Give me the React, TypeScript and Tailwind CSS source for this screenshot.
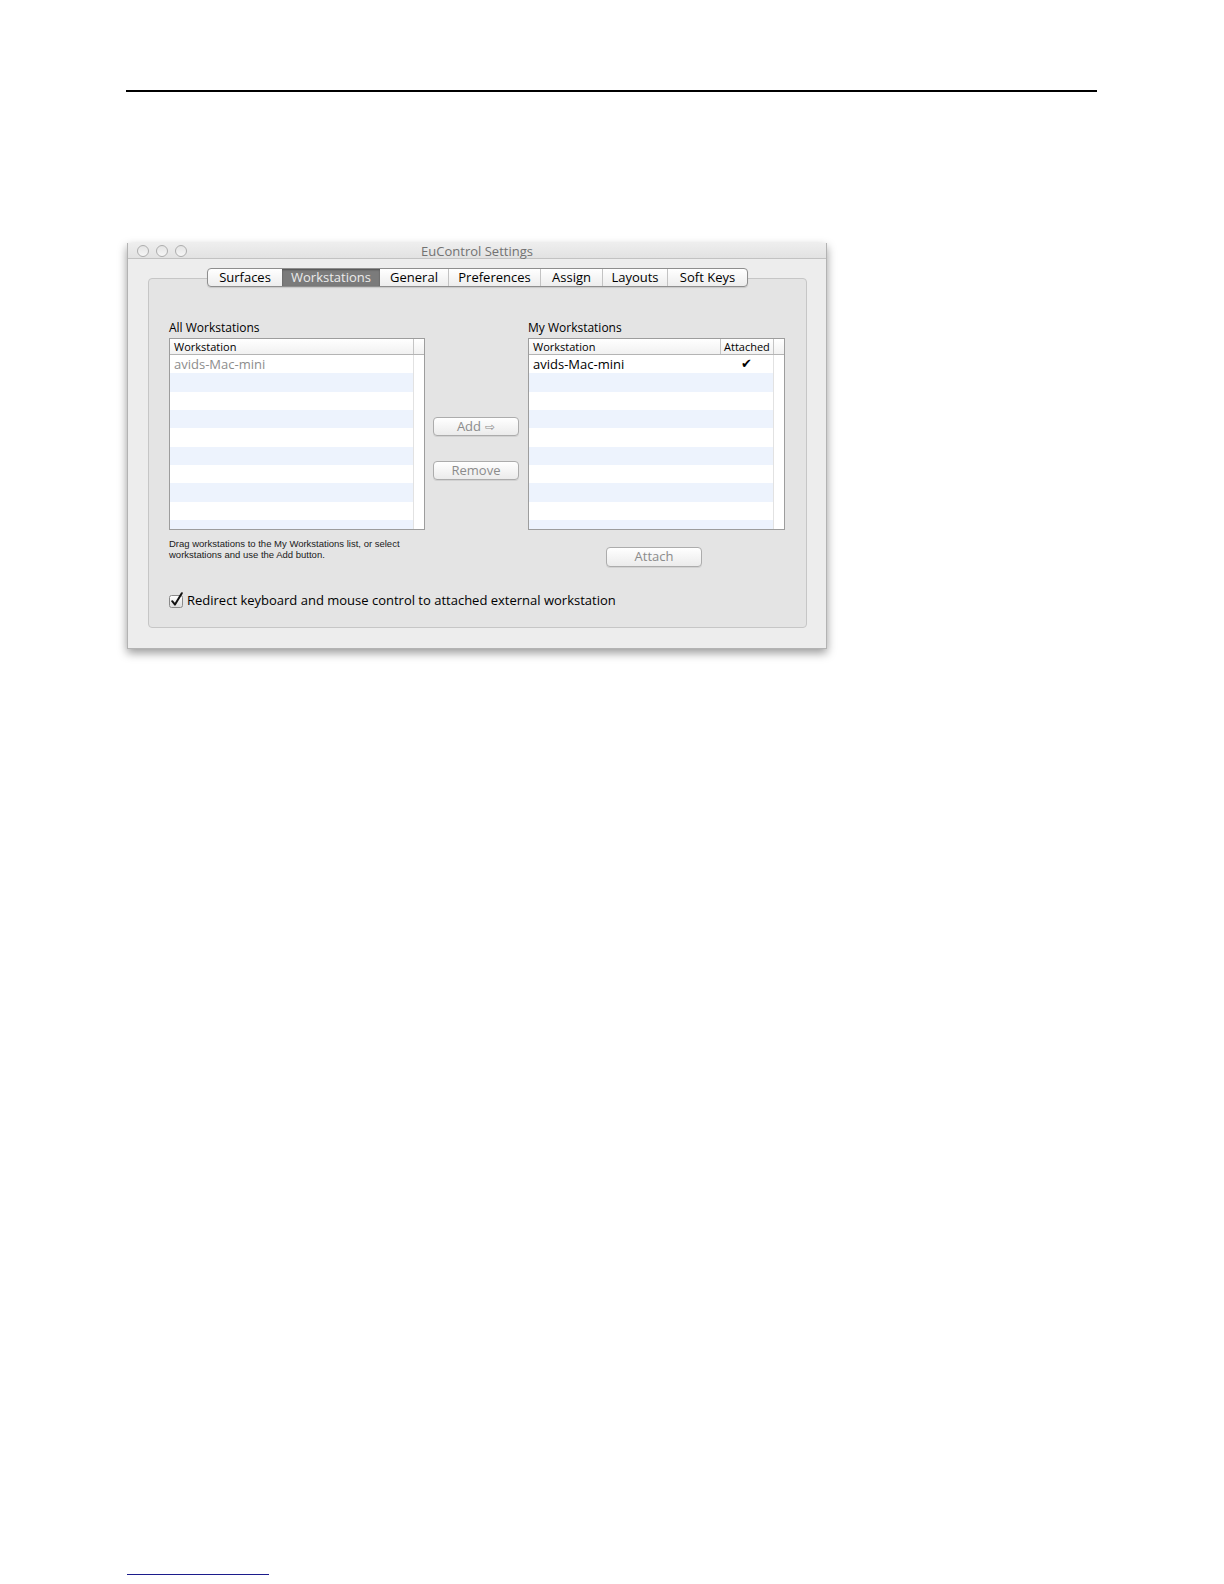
import React from "react";

const tabs = [
  { label: "Surfaces", w: "w-[74px]" },
  { label: "Workstations", w: "w-[98px]", active: true },
  { label: "General", w: "w-[68px]" },
  { label: "Preferences", w: "w-[92px]" },
  { label: "Assign", w: "w-[62px]" },
  { label: "Layouts", w: "w-[65px]" },
  { label: "Soft Keys", w: "w-[80px]" },
];

const rows = [0, 1, 2, 3, 4, 5, 6, 7, 8, 9];

function WorkstationTable({ attached }: { attached?: boolean }) {
  return (
    <div className="flex h-[192px] flex-col overflow-hidden border border-[#9d9d9d] bg-white">
      <div className="flex h-[16px] shrink-0 border-b border-[#b4b4b4] bg-gradient-to-b from-white to-[#f1f1f1] text-[11px] leading-[15px] text-black">
        <div className="flex-1 pl-[4px]">Workstation</div>
        {attached && <div className="w-[53px] border-l border-[#c4c4c4] pl-[3px]">Attached</div>}
        <div className="w-[11px] border-l border-[#c4c4c4]" />
      </div>
      <div className="flex flex-1">
        <div className="flex flex-1 flex-col">
          {rows.map((i) => (
            <div key={i} className={`flex h-[18.33px] shrink-0 text-[13px] leading-[18px] ${i % 2 === 0 ? "bg-white" : "bg-[#edf3fd]"}`}>
              {i === 0 && (
                <>
                  <div className={`flex-1 pl-[4px] ${attached ? "text-black" : "text-[#8d8d8d]"}`}>avids-Mac-mini</div>
                  {attached && <div className="w-[53px] text-center font-['DejaVu_Sans',sans-serif] text-[13px] text-black">✔</div>}
                </>
              )}
            </div>
          ))}
        </div>
        <div className="w-[11px] border-l border-[#e2e2e2] bg-white" />
      </div>
    </div>
  );
}

function MacButton({ children, className }: { children: React.ReactNode; className: string }) {
  return (
    <div className={`flex items-center justify-center rounded-[4px] border border-[#acacac] bg-gradient-to-b from-white to-[#ebebeb] text-[13px] text-[#8b8b8b] shadow-[0_1px_0_rgba(0,0,0,0.08)] ${className}`}>
      {children}
    </div>
  );
}

export default function App() {
  return (
    <div className="flex h-[1584px] w-[1224px] flex-col bg-white font-['Open_Sans','Noto_Sans',sans-serif]">
      <div className="ml-[126px] mt-[90px] h-[2px] w-[971px] bg-black" />

      {/* settings window */}
      <div className="ml-[127px] mt-[151px] flex h-[406px] w-[700px] flex-col border-x border-b border-[#b3b3b3] bg-[#ededed] shadow-[0_4px_9px_rgba(0,0,0,0.4)]">
        <div className="grid h-[16px] shrink-0 grid-cols-[1fr_auto_1fr] items-center border-b border-[#c2c2c2] bg-gradient-to-b from-[#eeeeee] to-[#e2e2e2]">
          <div className="flex gap-[7px] pl-[9px]">
            {[0, 1, 2].map((i) => (
              <div key={i} className="h-[12px] w-[12px] rounded-full border border-[#adadad] bg-gradient-to-b from-[#e4e4e4] to-[#f6f6f6]" />
            ))}
          </div>
          <div className="text-[13px] leading-[16px] text-[#727272]">EuControl Settings</div>
          <div />
        </div>

        <div className="flex flex-1 flex-col pl-[20px] pr-[19px] pt-[9px]">
          <div className="relative z-10 flex justify-center">
            <div className="flex h-[19px] overflow-hidden rounded-[4px] border border-[#8e8e8e] bg-gradient-to-b from-white to-[#ededed] shadow-[0_1px_1px_rgba(0,0,0,0.12)]">
              {tabs.map((t, i) => (
                <div
                  key={t.label}
                  className={`flex items-center justify-center text-[13px] leading-[17px] ${t.w} ${
                    t.active
                      ? "bg-[#7b7b7b] text-[#ececec] shadow-[inset_0_1px_2px_rgba(0,0,0,0.35)]"
                      : "text-black"
                  } ${i > 0 && !t.active && !tabs[i - 1].active ? "border-l border-[#c3c3c3]" : ""}`}
                >
                  {t.label}
                </div>
              ))}
            </div>
          </div>

          <div className="-mt-[9px] flex h-[350px] flex-col rounded-[4px] border border-[#c6c6c6] bg-[#e4e4e4] pl-[20px] pt-[41px]">
            <div className="flex items-start">
              <div className="flex w-[256px] flex-col">
                <div className="h-[18px] text-[12px] leading-[15px] text-black">All Workstations</div>
                <WorkstationTable />
                <div className="mt-[9px] font-['Liberation_Sans',sans-serif] text-[9.5px] leading-[10.5px] text-[#1a1a1a]">
                  Drag workstations to the My Workstations list, or select
                  <br />
                  workstations and use the Add button.
                </div>
              </div>

              <div className="ml-[8px] flex w-[86px] flex-col pt-[97px]">
                <MacButton className="h-[19px]">
                  Add <span className="ml-[4px] font-['DejaVu_Sans',sans-serif] text-[12px]">⇨</span>
                </MacButton>
                <MacButton className="mt-[25px] h-[19px]">Remove</MacButton>
              </div>

              <div className="ml-[9px] flex w-[257px] flex-col">
                <div className="h-[18px] text-[12px] leading-[15px] text-black">My Workstations</div>
                <WorkstationTable attached />
                <MacButton className="ml-[78px] mt-[17px] h-[20px] w-[96px]">Attach</MacButton>
              </div>
            </div>

            <div className="mt-[26px] flex h-[14px] items-center">
              <svg width="16" height="16" viewBox="0 0 16 16" className="-mt-[1px] shrink-0">
                <defs>
                  <linearGradient id="cb" x1="0" y1="0" x2="0" y2="1">
                    <stop offset="0" stopColor="#ffffff" />
                    <stop offset="1" stopColor="#dcdcdc" />
                  </linearGradient>
                </defs>
                <rect x="0.5" y="3.5" width="13" height="12" rx="2" fill="url(#cb)" stroke="#8a8a8a" />
                <path d="M3.2 9.2 L6 12.6 L12.8 1.2" fill="none" stroke="#111" strokeWidth="2" strokeLinecap="round" strokeLinejoin="round" />
              </svg>
              <div className="ml-[2px] text-[13px] leading-[14px] text-black">
                Redirect keyboard and mouse control to attached external workstation
              </div>
            </div>
          </div>
        </div>
      </div>

      <div className="mb-[9px] ml-[127px] mt-auto h-px w-[142px] bg-[#1c1c8c]" />
    </div>
  );
}
